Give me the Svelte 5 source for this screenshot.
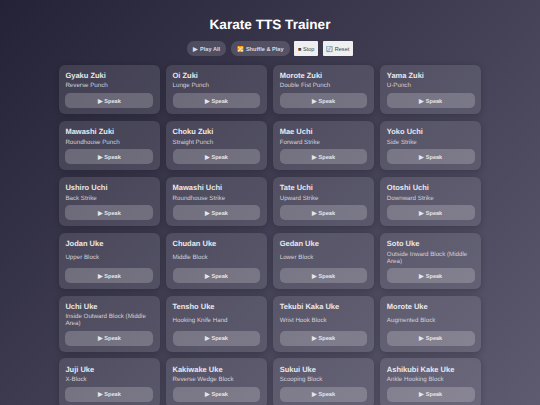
<script>
  const moves = [
    ['Gyaku Zuki', 'Reverse Punch'], ['Oi Zuki', 'Lunge Punch'], ['Morote Zuki', 'Double Fist Punch'], ['Yama Zuki', 'U-Punch'],
    ['Mawashi Zuki', 'Roundhouse Punch'], ['Choku Zuki', 'Straight Punch'], ['Mae Uchi', 'Forward Strike'], ['Yoko Uchi', 'Side Strike'],
    ['Ushiro Uchi', 'Back Strike'], ['Mawashi Uchi', 'Roundhouse Strike'], ['Tate Uchi', 'Upward Strike'], ['Otoshi Uchi', 'Downward Strike'],
    ['Jodan Uke', 'Upper Block'], ['Chudan Uke', 'Middle Block'], ['Gedan Uke', 'Lower Block'], ['Soto Uke', 'Outside Inward Block (Middle Area)'],
    ['Uchi Uke', 'Inside Outward Block (Middle Area)'], ['Tensho Uke', 'Hooking Knife Hand'], ['Tekubi Kaka Uke', 'Wrist Hook Block'], ['Morote Uke', 'Augmented Block'],
    ['Juji Uke', 'X-Block'], ['Kakiwake Uke', 'Reverse Wedge Block'], ['Sukui Uke', 'Scooping Block'], ['Ashikubi Kake Uke', 'Ankle Hooking Block']
  ];
</script>

<main class="page">
  <h1>Karate TTS Trainer</h1>
  <div class="controls">
    <button class="pill">▶ Play All</button>
    <button class="pill">🔀 Shuffle &amp; Play</button>
    <button class="plain">■ Stop</button>
    <button class="plain">🔄 Reset</button>
  </div>
  <div class="grid">
    {#each moves as [name, desc]}
      <div class="card">
        <div class="name">{name}</div>
        <div class="desc">{desc}</div>
        <button class="speak">▶ Speak</button>
      </div>
    {/each}
  </div>
</main>

<style>
  :global(body) {
    margin: 0;
    height: 405px;
    overflow: hidden;
    background: linear-gradient(135deg, #242236 0%, #5e5a70 100%);
  }
  .page {
    font-family: "Liberation Sans", Arial, sans-serif;
    color: #fff;
    padding: 15px 59px 0;
    text-align: center;
    text-rendering: geometricPrecision;
  }
  h1 {
    margin: 0;
    font-size: 13.6px;
    line-height: 20px;
    font-weight: 700;
    color: #fff;
  }
  .controls {
    display: flex;
    justify-content: center;
    align-items: center;
    gap: 4.5px;
    margin-top: 6px;
    height: 15px;
  }
  .controls button {
    font-family: inherit;
    font-size: 5.6px;
    font-weight: 700;
    height: 15px;
    cursor: pointer;
    padding: 0 6.4px;
  }
  .pill {
    border: 0;
    border-radius: 7px;
    color: #dcdce2;
    background: rgba(255, 255, 255, 0.14);
  }
  .plain {
    border: 0;
    border-radius: 1px;
    color: #444;
    background: #efefef;
    font-weight: 400 !important;
    padding: 0 3.6px !important;
  }
  .grid {
    display: grid;
    grid-template-columns: repeat(4, 1fr);
    gap: 6.6px;
    margin-top: 8.6px;
    text-align: left;
  }
  .card {
    display: flex;
    flex-direction: column;
    justify-content: space-between;
    box-sizing: border-box;
    min-height: 49.5px;
    padding: 6.2px 6.4px 6px;
    border-radius: 6px;
    background: rgba(255, 255, 255, 0.1);
    box-shadow: 0 1.5px 6px rgba(0, 0, 0, 0.2);
  }
  .name {
    font-size: 7.5px;
    line-height: 9px;
    font-weight: 700;
    color: #e9e9ed;
  }
  .desc {
    font-size: 6.2px;
    line-height: 7px;
    margin: 2.5px 0 3.5px;
    color: #d2d1da;
  }
  .speak {
    font-family: inherit;
    font-size: 5.6px;
    font-weight: 700;
    height: 15px;
    padding: 0;
    border: 0;
    border-radius: 5px;
    color: #e6e6ea;
    background: rgba(255, 255, 255, 0.2);
  }
</style>
